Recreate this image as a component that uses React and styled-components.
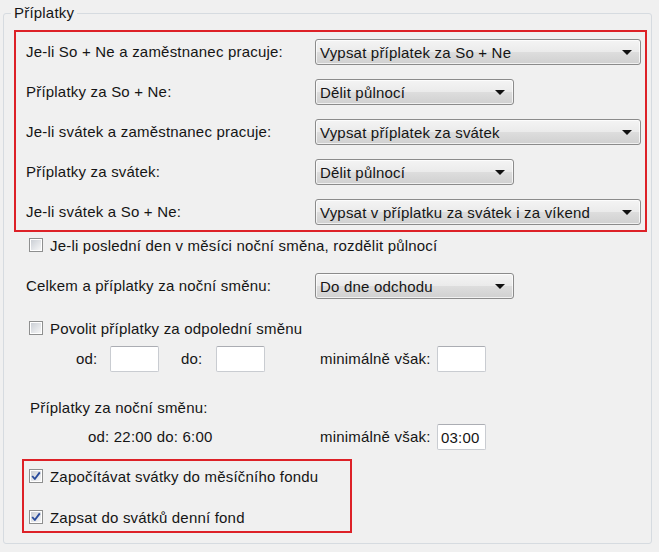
import React from "react";
import styled, { createGlobalStyle } from "styled-components";

const Global = createGlobalStyle`
  html, body { margin: 0; padding: 0; background: #f0f0f0; }
  body {
    font-family: "Liberation Sans", Arial, sans-serif;
    font-size: 15px;
    letter-spacing: 0.2px;
    color: #151515;
    width: 659px;
    height: 552px;
    overflow: hidden;
  }
  * { box-sizing: border-box; }
`;

const Group = styled.div`
  position: relative;
  margin: 13px 7px 0 3px;
  height: 531px;
  border: 1px solid #d6dbe0;
  border-radius: 3px;
  padding: 16px 4px 0 10px;
  display: flex;
  flex-direction: column;
`;

const Legend = styled.span`
  position: absolute;
  top: -9px;
  left: 7px;
  padding: 0 3px;
  background: #f0f0f0;
  line-height: 16px;
`;

const RedBox = styled.div`
  border: 2px solid #dd2127;
  margin: ${(p) => p.$margin || "0"};
  width: ${(p) => p.$width || "auto"};
  padding: ${(p) => p.$padding || "0"};
  display: flex;
  flex-direction: column;
  gap: ${(p) => p.$gap || "0"};
`;

const FormGrid = styled.div`
  display: grid;
  grid-template-columns: 289px auto;
  row-gap: 14px;
  align-items: center;
`;

const Label = styled.span`
  white-space: nowrap;
  line-height: 18px;
`;

const ComboBox = styled.div`
  position: relative;
  width: ${(p) => (p.$wide ? "326px" : "199px")};
  height: 26px;
  border: 1px solid #8b8b8b;
  border-radius: 3px;
  background: linear-gradient(#f4f4f4 0%, #ebebeb 48%, #dddddd 52%, #d0d0d0 100%);
  box-shadow: inset 0 0 0 1px rgba(255, 255, 255, 0.7);
  padding: 0 24px 0 4px;
  display: flex;
  align-items: center;
  white-space: nowrap;
  overflow: hidden;
`;

const Arrow = styled.span`
  position: absolute;
  right: 8px;
  top: 10px;
  width: 0;
  height: 0;
  border-left: 5px solid transparent;
  border-right: 5px solid transparent;
  border-top: 5px solid #111;
`;

const CheckRow = styled.label`
  display: flex;
  align-items: center;
  gap: 7px;
  height: 18px;
  margin: ${(p) => p.$margin || "0"};
  white-space: nowrap;
`;

const Box = styled.span`
  width: 14px;
  height: 14px;
  border: 1px solid #8e8f8f;
  background: #fff;
  padding: 1px;
  display: inline-flex;
  flex-shrink: 0;
`;

const BoxInner = styled.span`
  flex: 1;
  background: linear-gradient(135deg, #cbcfd5 0%, #e5e7ea 60%, #f6f6f6 100%);
  display: flex;
  align-items: center;
  justify-content: center;
`;

const ComboRow = styled.div`
  display: grid;
  grid-template-columns: 289px auto;
  align-items: center;
  padding-left: 12px;
  margin: ${(p) => p.$margin || "0"};
`;

const InlineRow = styled.div`
  display: flex;
  align-items: center;
  margin: ${(p) => p.$margin || "0"};
  padding-left: ${(p) => p.$indent || "0"};
`;

const Cell = styled.span`
  width: ${(p) => p.$w};
  flex-shrink: 0;
  white-space: nowrap;
  line-height: 18px;
`;

const TextInput = styled.div`
  width: 49px;
  height: 26px;
  flex-shrink: 0;
  background: #fff;
  border: 1px solid #c9ccd1;
  border-top-color: #abadb3;
  border-radius: 2px;
  padding: 0 3px;
  display: flex;
  align-items: center;
`;

const Check = ({ checked }) => (
  <Box>
    <BoxInner>
      {checked && (
        <svg width="10" height="10" viewBox="0 0 10 10">
          <path d="M1.2 5 L3.8 8 L8.8 1.4" fill="none" stroke="#2a4c9c" strokeWidth="1.9" strokeLinejoin="round" />
        </svg>
      )}
    </BoxInner>
  </Box>
);

const Combo = ({ wide, children }) => (
  <ComboBox $wide={wide}>
    {children}
    <Arrow />
  </ComboBox>
);

export default function App() {
  return (
    <>
      <Global />
      <Group>
        <Legend>Příplatky</Legend>
        <RedBox $padding="7px 4px 5px 10px">
          <FormGrid>
            <Label>Je-li So + Ne a zaměstnanec pracuje:</Label>
            <Combo wide>Vypsat příplatek za So + Ne</Combo>
            <Label>Příplatky za So + Ne:</Label>
            <Combo>Dělit půlnocí</Combo>
            <Label>Je-li svátek a zaměstnanec pracuje:</Label>
            <Combo wide>Vypsat příplatek za svátek</Combo>
            <Label>Příplatky za svátek:</Label>
            <Combo>Dělit půlnocí</Combo>
            <Label>Je-li svátek a So + Ne:</Label>
            <Combo wide>Vypsat v příplatku za svátek i za víkend</Combo>
          </FormGrid>
        </RedBox>

        <CheckRow $margin="4px 0 0 15px">
          <Check />
          Je-li poslední den v měsíci noční směna, rozdělit půlnocí
        </CheckRow>

        <ComboRow $margin="19px 0 0 0">
          <Label>Celkem a příplatky za noční směnu:</Label>
          <Combo>Do dne odchodu</Combo>
        </ComboRow>

        <CheckRow $margin="20px 0 0 15px">
          <Check />
          Povolit příplatky za odpolední směnu
        </CheckRow>

        <InlineRow $margin="9px 0 0 0" $indent="62px">
          <Cell $w="34px">od:</Cell>
          <TextInput />
          <Cell $w="22px" />
          <Cell $w="35px">do:</Cell>
          <TextInput />
          <Cell $w="55px" />
          <Cell $w="117px">minimálně však:</Cell>
          <TextInput />
        </InlineRow>

        <InlineRow $margin="27px 0 0 0" $indent="16px">
          <Label>Příplatky za noční směnu:</Label>
        </InlineRow>

        <InlineRow $margin="7px 0 0 0" $indent="74px">
          <Cell $w="232px">od: 22:00 do: 6:00</Cell>
          <Cell $w="117px">minimálně však:</Cell>
          <TextInput>03:00</TextInput>
        </InlineRow>

        <RedBox $margin="9px 0 0 8px" $width="330px" $padding="6px 0 5px 5px" $gap="23px">
          <CheckRow>
            <Check checked />
            Započítávat svátky do měsíčního fondu
          </CheckRow>
          <CheckRow>
            <Check checked />
            Zapsat do svátků denní fond
          </CheckRow>
        </RedBox>
      </Group>
    </>
  );
}
